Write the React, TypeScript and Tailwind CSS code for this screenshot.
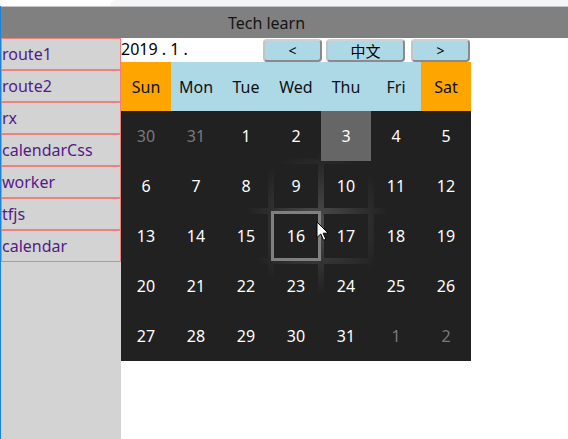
import React from "react";

const weekdays = ["Sun", "Mon", "Tue", "Wed", "Thu", "Fri", "Sat"];
const routes = ["route1", "route2", "rx", "calendarCss", "worker", "tfjs", "calendar"];

type Day = { n: number; other?: boolean };
const days: Day[] = [
  { n: 30, other: true },
  { n: 31, other: true },
  ...Array.from({ length: 31 }, (_, i) => ({ n: i + 1 })),
  { n: 1, other: true },
  { n: 2, other: true },
];

function Cursor() {
  return (
    <svg
      className="absolute left-[316px] top-[221px] pointer-events-none"
      width="14"
      height="21"
      viewBox="0 0 14 21"
    >
      <path
        d="M1 1 L1 16.5 L4.8 13 L7.5 19.2 L9.8 18.2 L7.2 12.2 L12.2 12.2 Z"
        fill="#fff"
        stroke="#000"
        strokeWidth="1"
        strokeLinejoin="round"
      />
    </svg>
  );
}

export default function App() {
  return (
    <div className="relative w-[568px] h-[439px] bg-white overflow-hidden font-['Noto_Sans',sans-serif] text-[16px]">
      <div className="h-[6px] bg-white flex">
        <div className="ml-[110px] flex-1 bg-[#f4f5f7] rounded-tl-[6px]" />
      </div>
      <div className="flex h-[433px]">
        <div className="w-px bg-[#1a84d8]" />
        <div className="flex-1 flex flex-col">
          <div className="h-px bg-[#c4c4c4]" />
          <div className="h-[31px] bg-[#808080] flex items-center justify-center pr-[36px] text-[#141414] text-[16px]">
            Tech learn
          </div>
          <div className="flex flex-1">
            <nav className="w-[120px] bg-[#d3d3d3] flex flex-col">
              {routes.map((r) => (
                <div
                  key={r}
                  className="h-[32px] border border-[#f08080] leading-[30px] text-[#551a8b] text-[16px]"
                >
                  {r}
                </div>
              ))}
            </nav>
            <main className="w-[350px] flex flex-col">
              <div className="h-[24px] flex items-start">
                <div className="flex-1 leading-[22px] text-black">2019 . 1 .</div>
                <button className="mt-px h-[23px] w-[59px] border-2 border-t-[#d0d0d0] border-l-[#c4c4c4] border-r-[#8a8a8a] border-b-[#8a8a8a] rounded-[4px] bg-[#add8e6] text-black text-[14px] leading-none font-['Noto_Sans',sans-serif]">
                  &lt;
                </button>
                <button className="ml-[4px] mt-px h-[23px] w-[79px] border-2 border-t-[#d0d0d0] border-l-[#c4c4c4] border-r-[#8a8a8a] border-b-[#8a8a8a] rounded-[4px] bg-[#add8e6] text-black text-[15px] leading-none font-['Noto_Sans_CJK_SC',sans-serif]">
                  中文
                </button>
                <button className="ml-[6px] mr-px mt-px h-[23px] w-[59px] border-2 border-t-[#d0d0d0] border-l-[#c4c4c4] border-r-[#8a8a8a] border-b-[#8a8a8a] rounded-[4px] bg-[#add8e6] text-black text-[14px] leading-none font-['Noto_Sans',sans-serif]">
                  &gt;
                </button>
              </div>
              <div className="grid grid-cols-7 h-[49px]">
                {weekdays.map((w, i) => (
                  <div
                    key={w}
                    className={`flex items-center justify-center text-[#111] ${
                      i === 0 || i === 6 ? "bg-[#ffa500]" : "bg-[#add8e6]"
                    }`}
                  >
                    {w}
                  </div>
                ))}
              </div>
              <div className="grid grid-cols-7 grid-rows-5 h-[250px] bg-[#212121] bg-[radial-gradient(circle_at_196px_112px,rgba(255,255,255,0.2)_0px,rgba(255,255,255,0.07)_45px,transparent_72px)]">
                {days.map((d, i) => {
                  const today = !d.other && d.n === 3;
                  const hover = !d.other && d.n === 16;
                  return (
                    <div
                      key={i}
                      className={`flex items-center justify-center border-[3px] ${
                        today
                          ? "bg-[#666666] border-[#666666]"
                          : hover
                          ? "border-[#808080] bg-[#212121] bg-clip-padding"
                          : "border-transparent bg-[#212121] bg-clip-padding"
                      } ${d.other ? "text-[#7a7a7a]" : "text-white"}`}
                    >
                      {d.n}
                    </div>
                  );
                })}
              </div>
            </main>
          </div>
        </div>
      </div>
      <Cursor />
    </div>
  );
}
